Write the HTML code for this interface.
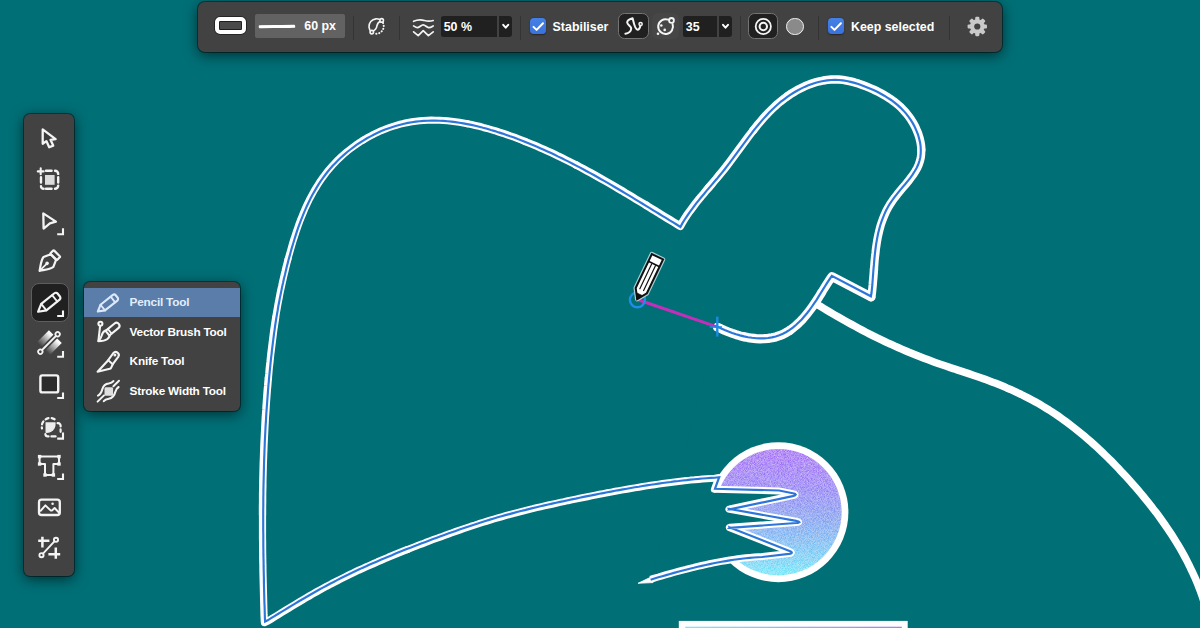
<!DOCTYPE html>
<html lang="en">
<head>
<meta charset="utf-8">
<title>Pencil Tool</title>
<style>
html,body{margin:0;padding:0;}
body{width:1200px;height:628px;overflow:hidden;background:#006f76;font-family:"Liberation Sans",sans-serif;}
#stage{position:relative;width:1200px;height:628px;overflow:hidden;background:#006f76;}
svg.art{position:absolute;left:0;top:0;}
.abs{position:absolute;}
#topbar{position:absolute;left:197.8px;top:1.7px;width:804.6px;height:50.3px;background:#424242;border-radius:7px;box-shadow:0 3px 14px rgba(0,0,0,.6),0 0 0 1px rgba(0,28,33,.6);}
#topbar .sep{position:absolute;top:14.5px;width:1px;height:24px;background:#343434;}
#topbar .txt{position:absolute;color:#fff;font-weight:bold;font-size:12.4px;line-height:16px;top:17px;white-space:nowrap;}
.field{position:absolute;top:14px;height:21.6px;background:#202020;border-radius:2.5px 0 0 2.5px;}
.cb{position:absolute;top:15.9px;width:16.4px;height:16.5px;border-radius:4px;background:linear-gradient(#4480e6,#3a72dc);box-shadow:0 0.5px 1.5px rgba(0,0,0,.45);}
.selbtn{position:absolute;top:11.3px;height:26.4px;background:#202020;border:1.2px solid #747474;border-radius:6.5px;box-sizing:border-box;}
#leftbar{position:absolute;left:24px;top:113.7px;width:50.3px;height:462.8px;background:#424242;border-radius:6px;box-shadow:0 3px 14px rgba(0,0,0,.6),0 0 0 1px rgba(0,28,33,.6);}
#menu{position:absolute;left:84px;top:282px;width:155.9px;height:129px;background:#424242;border-radius:6px;overflow:hidden;box-shadow:0 3px 14px rgba(0,0,0,.6),0 0 0 1px rgba(0,28,33,.6);}
#menu .row{position:absolute;left:0;width:100%;height:29.5px;}
#menu .row span{position:absolute;left:45.6px;top:6.8px;font-size:11.8px;line-height:16px;font-weight:bold;color:#fff;white-space:nowrap;letter-spacing:-0.22px;}
#menu .row.sel{background:#5a7da9;}
#menu .row.sel span{color:#e2eefc;}

</style>
</head>
<body>
<div id="stage">

<svg class="art" width="1200" height="628" viewBox="0 0 1200 628">
  <defs>
    <linearGradient id="cg" x1="0" y1="0" x2="0" y2="1">
      <stop offset="0" stop-color="#a462f6"/>
      <stop offset="0.28" stop-color="#9479f4"/>
      <stop offset="0.55" stop-color="#7b9cf0"/>
      <stop offset="0.8" stop-color="#6cc4f4"/>
      <stop offset="1" stop-color="#62e6f8"/>
    </linearGradient>
    <linearGradient id="rg" x1="0" y1="0" x2="1" y2="0">
      <stop offset="0" stop-color="#7fe6f4"/>
      <stop offset="1" stop-color="#b07cf0"/>
    </linearGradient>
    <filter id="noise" x="0" y="0" width="100%" height="100%">
      <feTurbulence type="fractalNoise" baseFrequency="1.3" numOctaves="1" seed="3" result="n"/>
      <feColorMatrix type="matrix" values="0 0 0 0 1  0 0 0 0 1  0 0 0 0 1  0.75 0 0 0 -0.2" result="a"/>
      <feComposite in="a" in2="SourceGraphic" operator="in" result="m"/>
      <feMerge><feMergeNode in="SourceGraphic"/><feMergeNode in="m"/></feMerge>
    </filter>
  </defs>
  <!-- ball -->
  <circle cx="778.4" cy="512.2" r="70" fill="#ffffff"/>
  <circle cx="778.4" cy="512.2" r="63.2" fill="url(#cg)" filter="url(#noise)"/>
  <!-- bottom card -->
  <rect x="678.8" y="620.9" width="228.9" height="12" fill="#ffffff"/>
  <rect x="685.2" y="626.7" width="216.6" height="6" fill="url(#rg)"/>
  <!-- arm (unselected) -->
  <path d="M816.8 304.4 L820.3 306.3 L823.7 308.4 L827.2 310.5 L830.6 312.5 L834.1 314.6 L837.5 316.6 L841.0 318.6 L844.5 320.5 L848.0 322.5 L851.5 324.4 L855.0 326.3 L858.5 328.2 L862.1 330.1 L865.6 332.0 L869.2 333.8 L872.7 335.6 L876.3 337.4 L879.9 339.1 L883.5 340.8 L887.1 342.6 L890.8 344.2 L894.4 345.9 L898.0 347.5 L901.7 349.1 L905.4 350.7 L909.0 352.3 L912.7 353.8 L916.4 355.3 L920.2 356.8 L923.9 358.2 L927.6 359.6 L931.4 361.0 L935.2 362.4 L938.9 363.7 L942.7 365.0 L946.5 366.3 L950.3 367.6 L954.1 368.8 L957.9 370.1 L961.8 371.4 L965.6 372.6 L969.4 373.9 L973.2 375.2 L977.0 376.5 L980.7 377.8 L984.5 379.1 L988.3 380.5 L992.0 381.9 L995.8 383.3 L999.5 384.8 L1003.2 386.3 L1006.8 387.9 L1010.5 389.4 L1014.1 391.1 L1017.7 392.8 L1021.3 394.5 L1024.9 396.3 L1028.4 398.1 L1031.9 400.0 L1035.4 401.9 L1038.9 403.8 L1042.3 405.9 L1045.7 407.9 L1049.1 410.0 L1052.4 412.2 L1055.8 414.4 L1059.1 416.7 L1062.3 419.0 L1065.6 421.3 L1068.8 423.7 L1071.9 426.1 L1075.1 428.6 L1078.2 431.1 L1081.3 433.6 L1084.4 436.2 L1087.5 438.8 L1090.5 441.4 L1093.5 444.1 L1096.5 446.8 L1099.4 449.5 L1102.3 452.3 L1105.2 455.1 L1108.1 457.9 L1111.0 460.7 L1113.8 463.6 L1116.6 466.5 L1119.4 469.4 L1122.1 472.4 L1124.9 475.3 L1127.6 478.3 L1130.3 481.3 L1132.9 484.3 L1135.6 487.3 L1138.2 490.3 L1140.8 493.4 L1143.4 496.5 L1145.9 499.6 L1148.4 502.7 L1150.9 505.8 L1153.3 509.0 L1155.8 512.1 L1158.2 515.3 L1160.5 518.5 L1162.8 521.7 L1165.1 525.0 L1167.4 528.3 L1169.6 531.6 L1171.8 534.9 L1173.9 538.2 L1176.0 541.6 L1178.1 545.0 L1180.1 548.4 L1182.1 551.9 L1184.0 555.4 L1185.9 558.9 L1187.7 562.4 L1189.5 566.0 L1191.2 569.6 L1192.9 573.2 L1194.6 576.8 L1196.2 580.5 L1197.7 584.2 L1199.2 588.0 L1200.6 591.8 L1202.0 595.6 L1203.3 599.5 L1204.5 603.3 L1206.0 607.0" fill="none" stroke="#ffffff" stroke-width="7.50" stroke-linejoin="round" stroke-linecap="butt" stroke-miterlimit="5"/>
  <!-- body fill -->
  <path d="M717.4 327.2 L721.0 328.7 L724.6 330.4 L728.3 331.9 L732.1 333.3 L735.9 334.6 L739.9 335.8 L743.9 336.8 L748.0 337.6 L752.0 338.2 L756.1 338.6 L760.1 338.8 L764.1 338.7 L768.1 338.4 L772.0 337.8 L775.8 336.9 L779.5 335.7 L783.1 334.2 L786.5 332.4 L789.8 330.3 L793.1 327.9 L796.1 325.4 L799.1 322.6 L802.0 319.7 L804.7 316.6 L807.4 313.4 L809.9 310.1 L812.3 306.8 L814.7 303.4 L816.9 300.0 L819.1 296.6 L821.2 293.2 L823.3 289.8 L825.4 286.4 L827.5 283.1 L829.6 279.8 L831.9 276.5 L871.2 297.0 L871.9 293.1 L872.3 289.1 L872.7 285.1 L873.0 281.1 L873.4 277.0 L873.7 273.0 L874.0 268.9 L874.3 264.9 L874.6 260.9 L875.0 256.9 L875.5 252.9 L875.9 248.9 L876.5 244.9 L877.1 241.0 L877.8 237.1 L878.7 233.2 L879.6 229.4 L880.6 225.6 L881.8 221.9 L883.2 218.2 L884.7 214.6 L886.3 211.0 L888.2 207.5 L890.2 204.1 L892.5 200.7 L894.9 197.4 L897.4 194.2 L900.1 190.9 L902.8 187.7 L905.5 184.6 L908.1 181.4 L910.6 178.1 L913.0 174.9 L915.2 171.6 L917.1 168.2 L918.7 164.7 L919.9 161.2 L920.8 157.5 L921.2 153.7 L921.3 149.9 L921.1 146.0 L920.5 142.1 L919.6 138.2 L918.4 134.4 L916.9 130.6 L915.2 126.8 L913.3 123.2 L911.1 119.7 L908.8 116.3 L906.2 113.1 L903.5 110.1 L900.7 107.2 L897.7 104.5 L894.6 102.0 L891.3 99.6 L888.0 97.4 L884.5 95.2 L881.0 93.3 L877.4 91.4 L873.7 89.6 L870.0 88.0 L866.2 86.4 L862.4 85.0 L858.5 83.6 L854.6 82.4 L850.7 81.4 L846.8 80.6 L842.9 79.9 L838.9 79.5 L835.0 79.4 L831.1 79.5 L827.2 79.9 L823.3 80.5 L819.4 81.3 L815.6 82.3 L811.8 83.5 L808.1 84.9 L804.4 86.4 L800.8 88.2 L797.2 90.0 L793.8 92.1 L790.3 94.2 L787.0 96.5 L783.8 98.9 L780.6 101.4 L777.6 103.9 L774.6 106.6 L771.7 109.4 L768.9 112.2 L766.1 115.1 L763.4 118.1 L760.8 121.1 L758.2 124.1 L755.7 127.3 L753.2 130.4 L750.7 133.6 L748.2 136.8 L745.8 140.1 L743.4 143.3 L741.0 146.6 L738.6 149.9 L736.2 153.1 L733.8 156.4 L731.4 159.6 L729.0 162.8 L726.6 166.0 L724.1 169.2 L721.6 172.3 L719.0 175.4 L716.5 178.5 L713.9 181.5 L711.3 184.6 L708.7 187.6 L706.1 190.6 L703.6 193.7 L701.0 196.7 L698.5 199.8 L696.0 202.9 L693.6 206.1 L691.2 209.3 L688.8 212.5 L686.5 215.8 L684.3 219.2 L682.2 222.7 L680.2 226.2 L676.9 224.1 L673.4 222.0 L670.0 219.9 L666.5 217.8 L663.1 215.7 L659.6 213.6 L656.2 211.4 L652.7 209.3 L649.3 207.2 L645.9 205.1 L642.4 203.0 L639.0 201.0 L635.5 198.9 L632.1 196.8 L628.7 194.7 L625.2 192.7 L621.8 190.6 L618.3 188.6 L614.8 186.5 L611.4 184.5 L607.9 182.5 L604.4 180.5 L601.0 178.6 L597.5 176.6 L594.0 174.6 L590.5 172.7 L587.0 170.8 L583.5 168.9 L579.9 167.0 L576.4 165.1 L572.8 163.3 L569.3 161.5 L565.7 159.7 L562.1 157.9 L558.5 156.2 L554.9 154.4 L551.3 152.7 L547.7 151.1 L544.0 149.4 L540.3 147.8 L536.7 146.2 L533.0 144.6 L529.2 143.1 L525.5 141.6 L521.8 140.1 L518.0 138.7 L514.2 137.2 L510.4 135.9 L506.6 134.5 L502.7 133.2 L498.8 132.0 L495.0 130.7 L491.1 129.6 L487.1 128.4 L483.2 127.4 L479.3 126.3 L475.3 125.4 L471.4 124.5 L467.4 123.7 L463.4 123.0 L459.4 122.3 L455.4 121.7 L451.5 121.2 L447.5 120.8 L443.5 120.5 L439.5 120.3 L435.5 120.2 L431.6 120.1 L427.6 120.2 L423.6 120.5 L419.7 120.8 L415.8 121.2 L411.8 121.8 L407.9 122.5 L404.0 123.3 L400.2 124.2 L396.3 125.3 L392.5 126.5 L388.7 127.8 L385.0 129.2 L381.2 130.7 L377.6 132.4 L373.9 134.1 L370.4 136.0 L366.8 137.9 L363.3 140.0 L359.9 142.1 L356.6 144.4 L353.3 146.7 L350.1 149.1 L346.9 151.6 L343.8 154.3 L340.9 156.9 L337.9 159.7 L335.1 162.6 L332.4 165.5 L329.8 168.5 L327.2 171.5 L324.8 174.7 L322.4 177.9 L320.1 181.2 L318.0 184.5 L315.9 187.9 L313.8 191.3 L311.9 194.8 L310.0 198.3 L308.2 201.9 L306.5 205.5 L304.8 209.2 L303.3 212.9 L301.7 216.7 L300.2 220.4 L298.8 224.2 L297.5 228.0 L296.1 231.9 L294.9 235.7 L293.6 239.6 L292.4 243.5 L291.3 247.4 L290.2 251.3 L289.1 255.2 L288.0 259.1 L287.0 263.0 L286.0 266.9 L285.1 270.8 L284.1 274.7 L283.2 278.7 L282.3 282.6 L281.5 286.5 L280.6 290.4 L279.8 294.3 L279.1 298.3 L278.3 302.2 L277.6 306.1 L276.9 310.1 L276.2 314.0 L275.6 318.0 L275.0 321.9 L274.4 325.9 L273.8 329.8 L273.3 333.8 L272.8 337.8 L272.3 341.8 L271.8 345.7 L271.3 349.7 L270.8 353.7 L270.4 357.7 L270.0 361.7 L269.5 365.7 L269.1 369.7 L268.8 373.6 L268.4 377.6 L268.0 381.6 L267.7 385.6 L267.3 389.6 L267.0 393.6 L266.7 397.6 L266.4 401.7 L266.1 405.7 L265.9 409.7 L265.6 413.7 L265.3 417.7 L265.1 421.7 L264.9 425.7 L264.7 429.7 L264.5 433.7 L264.3 437.8 L264.1 441.8 L263.9 445.8 L263.8 449.8 L263.6 453.8 L263.5 457.9 L263.3 461.9 L263.2 465.9 L263.1 469.9 L263.0 473.9 L262.9 478.0 L262.8 482.0 L262.8 486.0 L262.7 490.0 L262.6 494.1 L262.6 498.1 L262.6 502.1 L262.5 506.1 L262.5 510.2 L262.5 514.2 L262.5 518.2 L262.5 522.2 L262.5 526.3 L262.5 530.3 L262.5 534.3 L262.5 538.3 L262.6 542.3 L262.6 546.4 L262.6 550.4 L262.7 554.4 L262.7 558.4 L262.8 562.4 L262.9 566.4 L262.9 570.5 L263.0 574.5 L263.1 578.5 L263.2 582.5 L263.3 586.5 L263.4 590.5 L263.5 594.5 L263.6 598.5 L263.7 602.5 L263.8 606.5 L263.9 610.5 L264.0 614.5 L264.2 618.5 L264.4 622.6 L268.1 621.0 L271.5 618.9 L274.9 616.8 L278.3 614.7 L281.7 612.5 L285.2 610.4 L288.6 608.4 L292.0 606.3 L295.4 604.2 L298.9 602.1 L302.3 600.1 L305.8 598.0 L309.3 596.0 L312.7 594.0 L316.2 592.0 L319.7 590.1 L323.2 588.2 L326.8 586.2 L330.3 584.4 L333.8 582.5 L337.4 580.7 L341.0 578.9 L344.6 577.1 L348.2 575.3 L351.8 573.6 L355.4 571.8 L359.0 570.1 L362.7 568.5 L366.3 566.8 L370.0 565.2 L373.6 563.6 L377.3 561.9 L381.0 560.4 L384.7 558.8 L388.4 557.2 L392.1 555.7 L395.8 554.2 L399.5 552.7 L403.2 551.2 L407.0 549.7 L410.7 548.2 L414.5 546.8 L418.2 545.3 L422.0 543.9 L425.7 542.4 L429.5 541.0 L433.2 539.6 L437.0 538.2 L440.8 536.9 L444.5 535.5 L448.3 534.1 L452.1 532.8 L455.9 531.4 L459.7 530.1 L463.5 528.8 L467.3 527.5 L471.1 526.2 L474.9 525.0 L478.7 523.7 L482.5 522.5 L486.3 521.3 L490.2 520.1 L494.0 519.0 L497.8 517.9 L501.7 516.8 L505.5 515.7 L509.4 514.6 L513.3 513.6 L517.2 512.6 L521.0 511.6 L524.9 510.6 L528.8 509.6 L532.7 508.7 L536.6 507.7 L540.5 506.8 L544.4 505.9 L548.3 505.0 L552.2 504.2 L556.2 503.3 L560.1 502.4 L564.0 501.6 L567.9 500.7 L571.9 499.9 L575.8 499.1 L579.7 498.3 L583.6 497.5 L587.6 496.7 L591.5 495.9 L595.4 495.1 L599.4 494.3 L603.3 493.6 L607.3 492.8 L611.2 492.1 L615.2 491.3 L619.1 490.6 L623.1 489.9 L627.0 489.2 L631.0 488.5 L634.9 487.9 L638.9 487.2 L642.8 486.5 L646.8 485.9 L650.7 485.3 L654.7 484.7 L658.7 484.1 L662.6 483.5 L666.6 483.0 L670.6 482.5 L674.6 482.0 L678.5 481.5 L682.5 481.0 L686.5 480.6 L690.5 480.1 L694.5 479.8 L698.5 479.4 L702.5 479.0 L706.5 478.7 L710.5 478.4 L714.5 478.2 L718.5 477.8 L714.3 489.3 L779.0 491.0 L792.6 493.6 L794.0 494.0 L794.8 494.3 L795.1 494.6 L794.8 495.0 L794.0 495.3 L792.6 495.6 L729.6 509.0 L729.2 509.0 L729.1 509.1 L729.0 509.2 L729.1 509.3 L729.3 509.3 L729.6 509.4 L796.1 521.3 L797.4 521.6 L798.3 521.8 L798.5 522.1 L798.2 522.3 L797.4 522.4 L796.0 522.6 L729.8 527.3 L729.5 527.4 L729.3 527.4 L729.2 527.5 L729.2 527.6 L729.4 527.7 L729.7 527.8 L789.3 551.3 L790.5 551.9 L791.1 552.3 L791.3 552.7 L791.0 553.0 L790.3 553.3 L789.0 553.5 L762.0 556.6 L757.9 556.8 L753.9 557.1 L749.8 557.4 L745.7 557.8 L741.7 558.3 L737.7 558.8 L733.6 559.4 L729.6 560.0 L725.6 560.7 L721.6 561.4 L717.6 562.1 L713.6 562.9 L709.6 563.7 L705.6 564.6 L701.6 565.5 L697.6 566.4 L693.7 567.4 L689.7 568.3 L685.8 569.4 L681.8 570.4 L677.9 571.4 L673.9 572.5 L670.0 573.6 L666.1 574.7 L662.2 575.8 L658.3 577.0 L654.4 578.1 L650.5 579.4" fill="#006f76" stroke="none"/>
  <!-- tail tip -->
  <path d="M652 576.6 L638 583.3 L653 582.6 Z" fill="#ffffff" stroke="#ffffff" stroke-width="0.8" stroke-linejoin="round"/>
  <path d="M717.4 327.2 L721.0 328.7 L724.6 330.4 L728.3 331.9 L732.1 333.3 L735.9 334.6 L739.9 335.8 L743.9 336.8" fill="none" stroke="#ffffff" stroke-width="9.00" stroke-linejoin="round" stroke-linecap="round" stroke-miterlimit="5"/>
<path d="M743.9 336.8 L748.0 337.6 L752.0 338.2 L756.1 338.6 L760.1 338.8 L764.1 338.7 L768.1 338.4 L772.0 337.8 L775.8 336.9 L779.5 335.7 L783.1 334.2 L786.5 332.4 L789.8 330.3" fill="none" stroke="#ffffff" stroke-width="9.20" stroke-linejoin="round" stroke-linecap="round" stroke-miterlimit="5"/>
<path d="M789.8 330.3 L793.1 327.9 L796.1 325.4 L799.1 322.6 L802.0 319.7 L804.7 316.6 L807.4 313.4 L809.9 310.1 L812.3 306.8 L814.7 303.4 L816.9 300.0 L819.1 296.6 L821.2 293.2" fill="none" stroke="#ffffff" stroke-width="9.00" stroke-linejoin="round" stroke-linecap="round" stroke-miterlimit="5"/>
<path d="M821.2 293.2 L823.3 289.8 L825.4 286.4 L827.5 283.1 L829.6 279.8 L831.9 276.5 L871.2 297.0" fill="none" stroke="#ffffff" stroke-width="8.80" stroke-linejoin="round" stroke-linecap="round" stroke-miterlimit="5"/>
<path d="M871.2 297.0 L871.9 293.1 L872.3 289.1 L872.7 285.1 L873.0 281.1 L873.4 277.0 L873.7 273.0 L874.0 268.9" fill="none" stroke="#ffffff" stroke-width="8.40" stroke-linejoin="round" stroke-linecap="round" stroke-miterlimit="5"/>
<path d="M874.0 268.9 L874.3 264.9 L874.6 260.9 L875.0 256.9 L875.5 252.9 L875.9 248.9 L876.5 244.9 L877.1 241.0 L877.8 237.1 L878.7 233.2 L879.6 229.4 L880.6 225.6 L881.8 221.9 L883.2 218.2 L884.7 214.6 L886.3 211.0 L888.2 207.5 L890.2 204.1 L892.5 200.7 L894.9 197.4 L897.4 194.2 L900.1 190.9 L902.8 187.7 L905.5 184.6 L908.1 181.4 L910.6 178.1 L913.0 174.9 L915.2 171.6 L917.1 168.2 L918.7 164.7 L919.9 161.2 L920.8 157.5 L921.2 153.7 L921.3 149.9" fill="none" stroke="#ffffff" stroke-width="8.20" stroke-linejoin="round" stroke-linecap="round" stroke-miterlimit="5"/>
<path d="M921.3 149.9 L921.1 146.0 L920.5 142.1 L919.6 138.2 L918.4 134.4 L916.9 130.6 L915.2 126.8 L913.3 123.2 L911.1 119.7 L908.8 116.3 L906.2 113.1 L903.5 110.1 L900.7 107.2 L897.7 104.5 L894.6 102.0 L891.3 99.6 L888.0 97.4 L884.5 95.2 L881.0 93.3 L877.4 91.4 L873.7 89.6 L870.0 88.0 L866.2 86.4 L862.4 85.0 L858.5 83.6 L854.6 82.4 L850.7 81.4 L846.8 80.6 L842.9 79.9 L838.9 79.5 L835.0 79.4 L831.1 79.5 L827.2 79.9 L823.3 80.5 L819.4 81.3 L815.6 82.3 L811.8 83.5 L808.1 84.9 L804.4 86.4 L800.8 88.2 L797.2 90.0 L793.8 92.1 L790.3 94.2 L787.0 96.5" fill="none" stroke="#ffffff" stroke-width="8.40" stroke-linejoin="round" stroke-linecap="round" stroke-miterlimit="5"/>
<path d="M787.0 96.5 L783.8 98.9 L780.6 101.4 L777.6 103.9 L774.6 106.6 L771.7 109.4 L768.9 112.2 L766.1 115.1 L763.4 118.1 L760.8 121.1 L758.2 124.1 L755.7 127.3 L753.2 130.4" fill="none" stroke="#ffffff" stroke-width="8.20" stroke-linejoin="round" stroke-linecap="round" stroke-miterlimit="5"/>
<path d="M753.2 130.4 L750.7 133.6 L748.2 136.8 L745.8 140.1 L743.4 143.3 L741.0 146.6 L738.6 149.9 L736.2 153.1 L733.8 156.4 L731.4 159.6 L729.0 162.8 L726.6 166.0 L724.1 169.2 L721.6 172.3 L719.0 175.4 L716.5 178.5 L713.9 181.5 L711.3 184.6 L708.7 187.6" fill="none" stroke="#ffffff" stroke-width="8.00" stroke-linejoin="round" stroke-linecap="round" stroke-miterlimit="5"/>
<path d="M708.7 187.6 L706.1 190.6 L703.6 193.7 L701.0 196.7 L698.5 199.8 L696.0 202.9 L693.6 206.1 L691.2 209.3 L688.8 212.5 L686.5 215.8 L684.3 219.2 L682.2 222.7 L680.2 226.2 L676.9 224.1 L673.4 222.0 L670.0 219.9 L666.5 217.8 L663.1 215.7 L659.6 213.6 L656.2 211.4 L652.7 209.3 L649.3 207.2 L645.9 205.1" fill="none" stroke="#ffffff" stroke-width="7.80" stroke-linejoin="round" stroke-linecap="round" stroke-miterlimit="5"/>
<path d="M645.9 205.1 L642.4 203.0 L639.0 201.0 L635.5 198.9 L632.1 196.8 L628.7 194.7 L625.2 192.7 L621.8 190.6 L618.3 188.6 L614.8 186.5 L611.4 184.5 L607.9 182.5 L604.4 180.5 L601.0 178.6 L597.5 176.6 L594.0 174.6 L590.5 172.7 L587.0 170.8 L583.5 168.9 L579.9 167.0 L576.4 165.1" fill="none" stroke="#ffffff" stroke-width="7.60" stroke-linejoin="round" stroke-linecap="round" stroke-miterlimit="5"/>
<path d="M576.4 165.1 L572.8 163.3 L569.3 161.5 L565.7 159.7 L562.1 157.9 L558.5 156.2 L554.9 154.4 L551.3 152.7 L547.7 151.1 L544.0 149.4 L540.3 147.8 L536.7 146.2 L533.0 144.6 L529.2 143.1 L525.5 141.6" fill="none" stroke="#ffffff" stroke-width="7.40" stroke-linejoin="round" stroke-linecap="round" stroke-miterlimit="5"/>
<path d="M525.5 141.6 L521.8 140.1 L518.0 138.7 L514.2 137.2 L510.4 135.9 L506.6 134.5 L502.7 133.2 L498.8 132.0 L495.0 130.7 L491.1 129.6 L487.1 128.4 L483.2 127.4 L479.3 126.3 L475.3 125.4 L471.4 124.5 L467.4 123.7" fill="none" stroke="#ffffff" stroke-width="7.20" stroke-linejoin="round" stroke-linecap="round" stroke-miterlimit="5"/>
<path d="M467.4 123.7 L463.4 123.0 L459.4 122.3 L455.4 121.7 L451.5 121.2 L447.5 120.8 L443.5 120.5 L439.5 120.3 L435.5 120.2 L431.6 120.1 L427.6 120.2 L423.6 120.5 L419.7 120.8 L415.8 121.2 L411.8 121.8 L407.9 122.5 L404.0 123.3 L400.2 124.2 L396.3 125.3 L392.5 126.5 L388.7 127.8 L385.0 129.2 L381.2 130.7 L377.6 132.4 L373.9 134.1 L370.4 136.0 L366.8 137.9 L363.3 140.0" fill="none" stroke="#ffffff" stroke-width="7.00" stroke-linejoin="round" stroke-linecap="round" stroke-miterlimit="5"/>
<path d="M363.3 140.0 L359.9 142.1 L356.6 144.4 L353.3 146.7 L350.1 149.1 L346.9 151.6 L343.8 154.3 L340.9 156.9 L337.9 159.7 L335.1 162.6 L332.4 165.5 L329.8 168.5 L327.2 171.5 L324.8 174.7 L322.4 177.9 L320.1 181.2 L318.0 184.5 L315.9 187.9 L313.8 191.3 L311.9 194.8 L310.0 198.3 L308.2 201.9 L306.5 205.5 L304.8 209.2 L303.3 212.9 L301.7 216.7 L300.2 220.4 L298.8 224.2 L297.5 228.0 L296.1 231.9 L294.9 235.7 L293.6 239.6 L292.4 243.5 L291.3 247.4 L290.2 251.3 L289.1 255.2 L288.0 259.1" fill="none" stroke="#ffffff" stroke-width="6.80" stroke-linejoin="round" stroke-linecap="round" stroke-miterlimit="5"/>
<path d="M288.0 259.1 L287.0 263.0 L286.0 266.9 L285.1 270.8 L284.1 274.7 L283.2 278.7 L282.3 282.6 L281.5 286.5 L280.6 290.4 L279.8 294.3 L279.1 298.3 L278.3 302.2 L277.6 306.1 L276.9 310.1 L276.2 314.0 L275.6 318.0" fill="none" stroke="#ffffff" stroke-width="7.00" stroke-linejoin="round" stroke-linecap="round" stroke-miterlimit="5"/>
<path d="M275.6 318.0 L275.0 321.9 L274.4 325.9 L273.8 329.8 L273.3 333.8 L272.8 337.8 L272.3 341.8 L271.8 345.7 L271.3 349.7 L270.8 353.7 L270.4 357.7 L270.0 361.7 L269.5 365.7 L269.1 369.7 L268.8 373.6 L268.4 377.6" fill="none" stroke="#ffffff" stroke-width="7.20" stroke-linejoin="round" stroke-linecap="round" stroke-miterlimit="5"/>
<path d="M268.4 377.6 L268.0 381.6 L267.7 385.6 L267.3 389.6 L267.0 393.6 L266.7 397.6 L266.4 401.7 L266.1 405.7 L265.9 409.7 L265.6 413.7 L265.3 417.7 L265.1 421.7 L264.9 425.7 L264.7 429.7 L264.5 433.7 L264.3 437.8 L264.1 441.8 L263.9 445.8 L263.8 449.8 L263.6 453.8 L263.5 457.9 L263.3 461.9 L263.2 465.9 L263.1 469.9 L263.0 473.9 L262.9 478.0 L262.8 482.0 L262.8 486.0 L262.7 490.0 L262.6 494.1 L262.6 498.1 L262.6 502.1 L262.5 506.1 L262.5 510.2 L262.5 514.2" fill="none" stroke="#ffffff" stroke-width="7.40" stroke-linejoin="round" stroke-linecap="round" stroke-miterlimit="5"/>
<path d="M262.5 514.2 L262.5 518.2 L262.5 522.2 L262.5 526.3 L262.5 530.3 L262.5 534.3 L262.5 538.3 L262.6 542.3 L262.6 546.4 L262.6 550.4 L262.7 554.4 L262.7 558.4 L262.8 562.4 L262.9 566.4 L262.9 570.5 L263.0 574.5 L263.1 578.5 L263.2 582.5 L263.3 586.5 L263.4 590.5 L263.5 594.5 L263.6 598.5 L263.7 602.5 L263.8 606.5 L263.9 610.5 L264.0 614.5 L264.2 618.5 L264.4 622.6 L268.1 621.0 L271.5 618.9 L274.9 616.8 L278.3 614.7 L281.7 612.5 L285.2 610.4 L288.6 608.4 L292.0 606.3 L295.4 604.2 L298.9 602.1 L302.3 600.1 L305.8 598.0 L309.3 596.0 L312.7 594.0 L316.2 592.0 L319.7 590.1 L323.2 588.2 L326.8 586.2 L330.3 584.4 L333.8 582.5 L337.4 580.7 L341.0 578.9 L344.6 577.1 L348.2 575.3 L351.8 573.6 L355.4 571.8 L359.0 570.1 L362.7 568.5 L366.3 566.8 L370.0 565.2 L373.6 563.6 L377.3 561.9 L381.0 560.4 L384.7 558.8 L388.4 557.2 L392.1 555.7 L395.8 554.2 L399.5 552.7 L403.2 551.2 L407.0 549.7" fill="none" stroke="#ffffff" stroke-width="7.20" stroke-linejoin="round" stroke-linecap="round" stroke-miterlimit="5"/>
<path d="M407.0 549.7 L410.7 548.2 L414.5 546.8 L418.2 545.3 L422.0 543.9 L425.7 542.4 L429.5 541.0 L433.2 539.6 L437.0 538.2 L440.8 536.9 L444.5 535.5 L448.3 534.1 L452.1 532.8 L455.9 531.4 L459.7 530.1 L463.5 528.8 L467.3 527.5 L471.1 526.2 L474.9 525.0 L478.7 523.7 L482.5 522.5 L486.3 521.3 L490.2 520.1 L494.0 519.0 L497.8 517.9 L501.7 516.8 L505.5 515.7 L509.4 514.6 L513.3 513.6 L517.2 512.6 L521.0 511.6 L524.9 510.6 L528.8 509.6 L532.7 508.7 L536.6 507.7 L540.5 506.8 L544.4 505.9 L548.3 505.0 L552.2 504.2 L556.2 503.3 L560.1 502.4 L564.0 501.6 L567.9 500.7 L571.9 499.9 L575.8 499.1 L579.7 498.3 L583.6 497.5 L587.6 496.7 L591.5 495.9 L595.4 495.1 L599.4 494.3 L603.3 493.6 L607.3 492.8 L611.2 492.1 L615.2 491.3 L619.1 490.6 L623.1 489.9 L627.0 489.2 L631.0 488.5 L634.9 487.9 L638.9 487.2 L642.8 486.5 L646.8 485.9 L650.7 485.3 L654.7 484.7 L658.7 484.1 L662.6 483.5 L666.6 483.0 L670.6 482.5 L674.6 482.0 L678.5 481.5 L682.5 481.0 L686.5 480.6 L690.5 480.1 L694.5 479.8 L698.5 479.4 L702.5 479.0 L706.5 478.7 L710.5 478.4 L714.5 478.2 L718.5 477.8" fill="none" stroke="#ffffff" stroke-width="7.00" stroke-linejoin="round" stroke-linecap="round" stroke-miterlimit="5"/>
<path d="M718.5 477.8 L714.3 489.3" fill="none" stroke="#ffffff" stroke-width="6.80" stroke-linejoin="round" stroke-linecap="round" stroke-miterlimit="5"/><path d="M714.3 489.3 L779.0 491.0 L792.6 493.6 L794.0 494.0 L794.8 494.3 L795.1 494.6 L794.8 495.0 L794.0 495.3 L792.6 495.6 L729.6 509.0 L729.2 509.0 L729.1 509.1 L729.0 509.2 L729.1 509.3 L729.3 509.3 L729.6 509.4 L796.1 521.3 L797.4 521.6 L798.3 521.8 L798.5 522.1 L798.2 522.3 L797.4 522.4 L796.0 522.6 L729.8 527.3 L729.5 527.4 L729.3 527.4 L729.2 527.5 L729.2 527.6 L729.4 527.7 L729.7 527.8 L789.3 551.3 L790.5 551.9 L791.1 552.3 L791.3 552.7 L791.0 553.0 L790.3 553.3 L789.0 553.5 L762.0 556.6 L757.9 556.8 L753.9 557.1 L749.8 557.4 L745.7 557.8 L741.7 558.3 L737.7 558.8 L733.6 559.4 L729.6 560.0 L725.6 560.7 L721.6 561.4 L717.6 562.1 L713.6 562.9 L709.6 563.7 L705.6 564.6 L701.6 565.5 L697.6 566.4 L693.7 567.4 L689.7 568.3 L685.8 569.4 L681.8 570.4 L677.9 571.4 L673.9 572.5 L670.0 573.6 L666.1 574.7 L662.2 575.8 L658.3 577.0 L654.4 578.1 L650.5 579.4" fill="none" stroke="#ffffff" stroke-width="7.00" stroke-linejoin="round" stroke-linecap="butt" stroke-miterlimit="5"/>
  <path d="M717.6 326.8 L721.2 328.4 L724.7 330.0 L728.4 331.5 L732.2 333.0 L736.1 334.3 L740.0 335.4 L744.0 336.4 L748.0 337.2 L752.1 337.8 L756.1 338.2 L760.1 338.3 L764.1 338.3 L768.1 338.0 L771.9 337.4 L775.7 336.5 L779.3 335.3 L782.9 333.8 L786.3 332.0 L789.6 329.9 L792.8 327.6 L795.9 325.0 L798.8 322.3 L801.7 319.4 L804.4 316.3 L807.0 313.2 L809.6 309.9 L812.0 306.5 L814.3 303.2 L816.6 299.8 L818.7 296.4 L820.8 293.0 L822.9 289.6 L825.0 286.2 L827.1 282.9 L829.3 279.6 L831.8 275.9 L870.9 296.3 L871.5 293.0 L871.9 289.1 L872.3 285.1 L872.6 281.0 L872.9 277.0 L873.2 273.0 L873.5 268.9 L873.9 264.9 L874.2 260.8 L874.6 256.8 L875.0 252.8 L875.5 248.8 L876.0 244.9 L876.7 240.9 L877.4 237.0 L878.2 233.1 L879.2 229.3 L880.2 225.5 L881.4 221.8 L882.8 218.1 L884.3 214.4 L885.9 210.8 L887.8 207.3 L889.8 203.8 L892.1 200.5 L894.5 197.1 L897.1 193.9 L899.7 190.6 L902.4 187.4 L905.1 184.3 L907.7 181.1 L910.3 177.9 L912.6 174.6 L914.7 171.3 L916.6 168.0 L918.2 164.5 L919.4 161.0 L920.3 157.4 L920.7 153.7 L920.8 149.9 L920.6 146.1 L920.0 142.2 L919.1 138.4 L918.0 134.5 L916.5 130.8 L914.8 127.0 L912.9 123.4 L910.7 119.9 L908.4 116.6 L905.9 113.4 L903.2 110.4 L900.4 107.6 L897.4 104.9 L894.3 102.4 L891.1 100.0 L887.7 97.8 L884.3 95.7 L880.8 93.7 L877.2 91.8 L873.5 90.1 L869.8 88.5 L866.0 86.9 L862.2 85.4 L858.3 84.1 L854.5 82.9 L850.6 81.9 L846.7 81.0 L842.8 80.4 L838.9 80.0 L835.0 79.9 L831.1 80.0 L827.2 80.4 L823.4 81.0 L819.6 81.8 L815.8 82.8 L812.0 84.0 L808.3 85.3 L804.6 86.9 L801.0 88.6 L797.5 90.5 L794.0 92.5 L790.6 94.6 L787.3 96.9 L784.1 99.3 L780.9 101.7 L777.9 104.3 L774.9 107.0 L772.0 109.7 L769.2 112.5 L766.5 115.4 L763.8 118.4 L761.2 121.4 L758.6 124.5 L756.0 127.6 L753.5 130.7 L751.1 133.9 L748.6 137.1 L746.2 140.4 L743.8 143.6 L741.4 146.9 L739.0 150.2 L736.6 153.4 L734.2 156.7 L731.8 159.9 L729.4 163.2 L726.9 166.3 L724.5 169.5 L722.0 172.6 L719.4 175.7 L716.9 178.8 L714.3 181.8 L711.7 184.9 L709.1 187.9 L706.5 190.9 L704.0 194.0 L701.4 197.0 L698.9 200.1 L696.4 203.2 L694.0 206.4 L691.6 209.6 L689.2 212.8 L687.0 216.1 L684.7 219.5 L682.6 222.9 L680.4 226.9 L676.6 224.5 L673.2 222.4 L669.7 220.3 L666.3 218.2 L662.8 216.1 L659.4 214.0 L655.9 211.9 L652.5 209.8 L649.0 207.7 L645.6 205.6 L642.2 203.5 L638.7 201.4 L635.3 199.3 L631.8 197.2 L628.4 195.1 L625.0 193.1 L621.5 191.0 L618.1 189.0 L614.6 187.0 L611.1 184.9 L607.7 182.9 L604.2 180.9 L600.7 179.0 L597.3 177.0 L593.8 175.0 L590.3 173.1 L586.8 171.2 L583.2 169.3 L579.7 167.4 L576.2 165.6 L572.6 163.7 L569.1 161.9 L565.5 160.1 L561.9 158.3 L558.3 156.6 L554.7 154.8 L551.1 153.1 L547.5 151.5 L543.8 149.8 L540.2 148.2 L536.5 146.6 L532.8 145.0 L529.1 143.5 L525.4 142.0 L521.6 140.5 L517.8 139.1 L514.1 137.6 L510.2 136.3 L506.4 134.9 L502.6 133.6 L498.7 132.4 L494.8 131.1 L490.9 130.0 L487.0 128.8 L483.1 127.8 L479.2 126.7 L475.2 125.8 L471.3 124.9 L467.3 124.1 L463.3 123.4 L459.4 122.7 L455.4 122.1 L451.4 121.6 L447.4 121.2 L443.5 120.9 L439.5 120.7 L435.5 120.6 L431.6 120.6 L427.6 120.7 L423.7 120.9 L419.7 121.2 L415.8 121.6 L411.9 122.2 L408.0 122.9 L404.1 123.7 L400.3 124.7 L396.4 125.7 L392.6 126.9 L388.9 128.2 L385.1 129.6 L381.4 131.1 L377.7 132.8 L374.1 134.5 L370.6 136.4 L367.0 138.3 L363.6 140.4 L360.2 142.5 L356.8 144.7 L353.6 147.1 L350.4 149.5 L347.2 152.0 L344.2 154.6 L341.2 157.3 L338.3 160.0 L335.5 162.9 L332.7 165.8 L330.1 168.8 L327.6 171.8 L325.1 175.0 L322.8 178.2 L320.5 181.4 L318.4 184.7 L316.3 188.1 L314.3 191.6 L312.3 195.0 L310.5 198.6 L308.7 202.2 L307.0 205.8 L305.4 209.4 L303.8 213.1 L302.3 216.9 L300.8 220.6 L299.4 224.4 L298.0 228.2 L296.7 232.1 L295.5 235.9 L294.3 239.8 L293.1 243.7 L291.9 247.6 L290.8 251.5 L289.8 255.4 L288.7 259.3 L287.7 263.2 L286.7 267.1 L285.8 271.0 L284.9 274.9 L283.9 278.8 L283.1 282.7 L282.2 286.6 L281.4 290.6 L280.6 294.5 L279.8 298.4 L279.1 302.3 L278.3 306.3 L277.7 310.2 L277.0 314.1 L276.3 318.1 L275.7 322.0 L275.1 326.0 L274.6 329.9 L274.0 333.9 L273.5 337.9 L273.0 341.8 L272.5 345.8 L272.0 349.8 L271.6 353.8 L271.1 357.8 L270.7 361.7 L270.3 365.7 L269.9 369.7 L269.5 373.7 L269.1 377.7 L268.8 381.7 L268.4 385.7 L268.1 389.7 L267.8 393.7 L267.5 397.7 L267.2 401.7 L266.9 405.7 L266.6 409.7 L266.3 413.7 L266.1 417.7 L265.9 421.7 L265.6 425.8 L265.4 429.8 L265.2 433.8 L265.0 437.8 L264.8 441.8 L264.7 445.8 L264.5 449.8 L264.4 453.9 L264.2 457.9 L264.1 461.9 L264.0 465.9 L263.9 469.9 L263.8 474.0 L263.7 478.0 L263.6 482.0 L263.5 486.0 L263.4 490.1 L263.4 494.1 L263.3 498.1 L263.3 502.1 L263.3 506.1 L263.2 510.2 L263.2 514.2 L263.2 518.2 L263.2 522.2 L263.2 526.3 L263.2 530.3 L263.3 534.3 L263.3 538.3 L263.3 542.3 L263.3 546.4 L263.4 550.4 L263.4 554.4 L263.5 558.4 L263.6 562.4 L263.6 566.4 L263.7 570.4 L263.8 574.5 L263.9 578.5 L263.9 582.5 L264.0 586.5 L264.1 590.5 L264.2 594.5 L264.3 598.5 L264.4 602.5 L264.6 606.5 L264.7 610.5 L264.8 614.5 L264.9 618.5 L265.1 621.5 L267.7 620.3 L271.1 618.2 L274.5 616.1 L277.9 614.0 L281.4 611.9 L284.8 609.8 L288.2 607.8 L291.7 605.7 L295.1 603.6 L298.5 601.5 L302.0 599.5 L305.5 597.5 L308.9 595.5 L312.4 593.5 L315.9 591.5 L319.4 589.5 L322.9 587.6 L326.5 585.7 L330.0 583.8 L333.6 582.0 L337.1 580.1 L340.7 578.3 L344.3 576.5 L347.9 574.8 L351.5 573.0 L355.1 571.3 L358.8 569.6 L362.4 567.9 L366.1 566.3 L369.7 564.6 L373.4 563.0 L377.1 561.4 L380.8 559.8 L384.5 558.3 L388.2 556.7 L391.9 555.2 L395.6 553.6 L399.3 552.1 L403.0 550.6 L406.8 549.1 L410.5 547.7 L414.2 546.2 L418.0 544.8 L421.8 543.3 L425.5 541.9 L429.3 540.5 L433.0 539.1 L436.8 537.7 L440.6 536.3 L444.3 534.9 L448.1 533.6 L451.9 532.2 L455.7 530.9 L459.5 529.6 L463.3 528.3 L467.1 527.0 L470.9 525.7 L474.7 524.4 L478.5 523.2 L482.3 522.0 L486.2 520.8 L490.0 519.6 L493.8 518.5 L497.7 517.3 L501.5 516.2 L505.4 515.1 L509.3 514.1 L513.1 513.1 L517.0 512.0 L520.9 511.0 L524.8 510.1 L528.7 509.1 L532.6 508.1 L536.5 507.2 L540.4 506.3 L544.3 505.4 L548.2 504.5 L552.1 503.6 L556.0 502.8 L560.0 501.9 L563.9 501.1 L567.8 500.2 L571.7 499.4 L575.7 498.6 L579.6 497.7 L583.5 496.9 L587.5 496.1 L591.4 495.4 L595.3 494.6 L599.3 493.8 L603.2 493.1 L607.2 492.3 L611.1 491.6 L615.1 490.8 L619.0 490.1 L623.0 489.4 L626.9 488.7 L630.9 488.0 L634.8 487.3 L638.8 486.7 L642.7 486.0 L646.7 485.4 L650.7 484.8 L654.6 484.2 L658.6 483.6 L662.6 483.0 L666.5 482.5 L670.5 482.0 L674.5 481.4 L678.5 481.0 L682.5 480.5 L686.5 480.1 L690.4 479.6 L694.4 479.2 L698.4 478.9 L702.4 478.5 L706.5 478.2 L710.5 477.9 L714.5 477.7 L719.2 477.2 L715.0 488.8 L779.1 490.5 L792.7 493.2 L794.1 493.5 L795.1 493.9 L795.7 494.6 L795.1 495.4 L794.1 495.7 L792.7 496.1 L729.7 509.4 L729.4 509.5 L729.3 509.5 L729.6 509.2 L729.3 508.9 L729.4 508.9 L729.7 509.0 L796.2 520.9 L797.6 521.2 L798.5 521.4 L799.3 522.1 L798.4 522.7 L797.5 522.9 L796.1 523.0 L729.8 527.8 L729.5 527.8 L729.5 527.8 L729.7 527.6 L729.6 527.3 L729.6 527.3 L729.9 527.4 L789.5 551.0 L790.7 551.5 L791.5 552.0 L791.8 552.8 L791.3 553.4 L790.4 553.7 L789.1 553.9 L762.0 557.0 L757.9 557.2 L753.9 557.5 L749.8 557.9 L745.8 558.3 L741.7 558.7 L737.7 559.2 L733.7 559.8 L729.7 560.4 L725.6 561.1 L721.6 561.8 L717.6 562.5 L713.6 563.3 L709.7 564.1 L705.7 565.0 L701.7 565.9 L697.7 566.8 L693.8 567.8 L689.8 568.7 L685.9 569.7 L681.9 570.8 L678.0 571.8 L674.0 572.9 L670.1 574.0 L666.2 575.1 L662.3 576.2 L658.4 577.3 L654.5 578.5 L650.6 579.8" fill="none" stroke="#2c76da" stroke-width="2.15" stroke-linejoin="miter" stroke-linecap="butt" stroke-miterlimit="5"/>
  <!-- live pencil stroke -->
  <line x1="637.3" y1="299.5" x2="717" y2="326.9" stroke="#c42fba" stroke-width="3.1"/>
  <circle cx="637.4" cy="299.8" r="7.5" fill="none" stroke="#1f8de6" stroke-width="2.4"/>
  <path d="M717.3 316.6 V336.6" stroke="#1c8be2" stroke-width="2.4" fill="none"/><path d="M709.6 327 H722" stroke="#1c8be2" stroke-width="1.8" fill="none" opacity="0.85"/>
  <!-- pencil cursor -->
  <g transform="translate(637.2 299.2) rotate(25.5)">
    <path d="M0 0 L-6.2 -9.5 L-6.2 -47 L6.2 -47 L6.2 -9.5 Z" fill="#ffffff" stroke="#a9cfd3" stroke-width="4.4" stroke-linejoin="round"/>
    <path d="M0 0 L-6.2 -9.5 L-6.2 -47 L6.2 -47 L6.2 -9.5 Z" fill="#ffffff" stroke="#111111" stroke-width="2" stroke-linejoin="miter"/>
    <path d="M-6.2 -39 H6.2" stroke="#111" stroke-width="1.7"/>
    <path d="M-2.1 -38.5 V-10 M2.1 -38.5 V-10" stroke="#111" stroke-width="1.2"/>
    <path d="M0 0.5 L-3.6 -5.4 H3.6 Z" fill="#111" stroke="#111" stroke-width="0.8"/>
  </g>
</svg>

<div id="topbar">
  <!-- stroke style swatch -->
  <div class="abs" style="left:16.9px;top:15.1px;width:31.4px;height:17.5px;box-sizing:border-box;border:4.4px solid #fff;border-top-width:4.9px;border-bottom-width:4.9px;border-radius:5px;background:#4a4a4a;box-shadow:0 0 0 .8px #1e1e1e, inset 0 0 0 .9px #1e1e1e;"></div>
  <!-- stroke width field -->
  <div class="abs" style="left:57.5px;top:12.4px;width:89.5px;height:23.7px;background:#626262;border-radius:2px;">
    <span class="txt" style="left:49px;top:3.9px;">60 px</span>
  </div>
  <div class="sep" style="left:155px"></div>
  <div class="sep" style="left:201.5px"></div>
  <div class="field" style="left:243.3px;width:55.7px;"><span class="txt" style="left:2.6px;top:3.5px">50 %</span></div>
  <div class="field" style="left:301.3px;width:12.7px;border-radius:0 3px 3px 0;"></div>
  <div class="sep" style="left:322px"></div>
  <div class="cb" style="left:332px"></div>
  <span class="txt" style="left:354.8px">Stabiliser</span>
  <div class="selbtn" style="left:420.3px;width:31.4px"></div>
  <div class="abs" style="left:454px;top:11.5px;width:27.5px;height:25.7px;background:#464646;border-radius:6px;"></div>
  <div class="field" style="left:485.6px;width:33.3px;"><span class="txt" style="left:2.4px;top:3.5px">35</span></div>
  <div class="field" style="left:521px;width:12.8px;border-radius:0 3px 3px 0;"></div>
  <div class="sep" style="left:542px"></div>
  <div class="selbtn" style="left:550.5px;width:29.5px"></div>
  <div class="abs" style="left:588.6px;top:15.9px;width:17.4px;height:17.4px;box-sizing:border-box;border-radius:50%;background:#8a8a8a;border:1.9px solid #f4f4f4;"></div>
  <div class="sep" style="left:620px"></div>
  <div class="cb" style="left:630px"></div>
  <span class="txt" style="left:653.2px">Keep selected</span>
  <div class="sep" style="left:751px"></div>
  <!-- icon overlay in page coordinates -->
  <svg class="abs" style="left:0;top:0" width="804.5" height="51" viewBox="198 1.5 804.5 51" fill="none" stroke="#f4f4f4" stroke-linecap="round" stroke-linejoin="round">
    <!-- stroke preview line -->
    <path d="M259.6 25.5 C268 25.1 286 25.5 294.2 25.2 L294.4 26.3 C286 26.9 268 26.2 259.6 26.8 Z" fill="#fff" stroke="#fff" stroke-width="1.7"/>
    <!-- curve icon -->
    <g stroke-width="1.6">
      <path d="M381.5 20.1 A7.6 7.6 0 0 0 371.7 31.8"/>
      <path d="M383 22.4 A7.6 7.6 0 0 1 374.2 33" stroke-dasharray="0.2 2.75" stroke-width="2"/>
      <path d="M372.6 30.6 C376.4 29.6 376.6 27.2 377 25 C377.5 22.6 378.8 21.4 380.6 20.7"/>
      <circle cx="381.7" cy="19.9" r="1.75" fill="#424242"/>
      <circle cx="371.8" cy="31.6" r="1.75" fill="#424242"/>
    </g>
    <!-- smoothing icon -->
    <g stroke-width="1.7">
      <path d="M413.6 20.8 C416.6 19.4 419.6 19 422.6 19.6 C425.6 20.2 428 21.6 433.2 20"/>
      <path d="M413.6 25.4 C415 26.4 416.4 27.4 417.8 27.2 C419.8 26.8 421.2 24.4 423.2 24.4 C425.2 24.4 426.6 26.9 428.6 27.2 C430.2 27.4 431.6 26.4 433.2 25.4"/>
      <path d="M413.6 31.3 L418.2 35.2 L423.2 30.2 L428.4 35.2 L433.2 31.3"/>
    </g>
    <!-- dropdown chevrons -->
    <path d="M503.2 24.3 L505.7 27.2 L508.2 24.3" stroke="#fff" stroke-width="2"/>
    <path d="M723 24.3 L725.5 27.2 L728 24.3" stroke="#fff" stroke-width="2"/>
    <!-- checkmarks -->
    <path d="M533.5 26.4 L536.6 29.4 L543 22.7" stroke="#fff" stroke-width="2"/>
    <path d="M831.4 26.4 L834.5 29.4 L840.9 22.7" stroke="#fff" stroke-width="2"/>
    <!-- rope mode -->
    <g stroke-width="2">
      <path d="M625.4 33.2 C628.6 32.8 631.2 30.6 631.2 28 C631.2 25.6 627.4 24.4 627.2 22 C627 19.8 630 18.6 632.6 17.8 C633.6 21 634.6 29 637.6 29.2 C639.4 29.2 640 27 640.4 25.2"/>
      <circle cx="640.6" cy="23.5" r="1.6" stroke-width="1.5"/>
    </g>
    <!-- window mode -->
    <g stroke-width="2">
      <path d="M668.1 19.1 A7.4 7.4 0 1 0 672.6 23.6"/>
      <circle cx="671.5" cy="19.9" r="2.4" stroke-width="1.8"/>
      <circle cx="661.3" cy="25" r="1.3" fill="#f4f4f4" stroke="none"/>
      <circle cx="664.7" cy="29.4" r="1.3" fill="#f4f4f4" stroke="none"/>
      <circle cx="658" cy="33.3" r="1.3" fill="#f4f4f4" stroke="none"/>
    </g>
    <!-- concentric -->
    <circle cx="763.3" cy="26" r="7.6" stroke-width="1.8"/>
    <circle cx="763.3" cy="26" r="3.7" stroke-width="2.1"/>
    <!-- gear -->
    <g transform="translate(977.3 26)" stroke="none" fill="#c9c9c9">
      <circle r="7.3"/>
      <rect x="-2.1" y="-9.7" width="4.2" height="19.4" rx="1.1"/>
      <rect x="-2.1" y="-9.7" width="4.2" height="19.4" rx="1.1" transform="rotate(45)"/>
      <rect x="-2.1" y="-9.7" width="4.2" height="19.4" rx="1.1" transform="rotate(90)"/>
      <rect x="-2.1" y="-9.7" width="4.2" height="19.4" rx="1.1" transform="rotate(135)"/>
      <circle r="3.1" fill="#424242"/>
    </g>
  </svg>
</div>

<div id="leftbar"></div>
<div class="abs" style="left:31px;top:283px;width:38px;height:39px;box-sizing:border-box;background:#202020;border:1px solid #5e5e5e;border-radius:8px;"></div>
<svg class="abs" style="left:24px;top:114px" width="51" height="463" viewBox="24 114 51 463" fill="none" stroke="#f4f4f4" stroke-linecap="round" stroke-linejoin="round">
  <defs>
    <linearGradient id="gt" x1="0" y1="0" x2="1" y2="0">
      <stop offset="0" stop-color="#fff" stop-opacity="0"/>
      <stop offset="0.85" stop-color="#fff" stop-opacity="0.95"/>
      <stop offset="1" stop-color="#fff" stop-opacity="1"/>
    </linearGradient>
  </defs>
  <!-- move tool -->
  <path d="M42.7 129.4 L42.7 143.8 L46.4 141.1 L49.2 147.2 L53.2 145.6 L50.5 139.8 L55.6 139.2 Z" stroke-width="2.30" fill="#3c3c3c"/>
  <!-- artboard tool -->
  <g stroke-width="2.40">
    <rect x="45" y="175" width="9.6" height="9.8" fill="#dcdcdc" stroke="none"/>
    <path d="M46 170.7 H51.6 M55 170.7 A3.2 3.2 0 0 1 58.2 173.9 M58.2 177.3 V182.6 M58.2 185.6 A3.2 3.2 0 0 1 55 188.8 M51.6 188.8 H46 M43.6 188.8 A2.6 2.6 0 0 1 41 186.2 M41 182.6 V177.3"/>
    <path d="M37.8 171.4 H43.6 M40.7 168.4 V174.2" stroke-width="2.10"/>
  </g>
  <!-- node tool -->
  <path d="M43.3 213.4 L43.6 228.6 L49.9 223.4 L55.9 221.6 Z" stroke-width="2.30"/>
  <path d="M63 228.2 V234.3 H57.2" stroke-width="2.10" stroke-linecap="butt" stroke-linejoin="miter"/>
  <!-- pen tool -->
  <g transform="translate(39.6 270.8) rotate(45)" stroke-width="2.20">
    <path d="M0 0 C-2.6 -4 -6.4 -8 -7 -12.5 L-3.8 -19.6 H3.8 L7 -12.5 C6.4 -8 2.6 -4 0 0 Z"/>
    <rect x="-4.7" y="-24.6" width="9.4" height="5" rx="0.8"/>
    <path d="M0 -1 V-9.2" stroke-width="1.70"/>
    <circle cx="0" cy="-10.6" r="1.2" fill="#f4f4f4" stroke-width="1.20"/>
  </g>
  <!-- pencil tool (selected) -->
  <g transform="translate(37.9 311.9) rotate(51)" stroke-width="2.20">
    <path d="M0 -0.3 L-4.1 -7.6 V-24.6 A2.2 2.2 0 0 1 -1.9 -26.8 H1.9 A2.2 2.2 0 0 1 4.1 -24.6 V-7.6 Z"/>
    <path d="M-4.1 -7.6 H4.1 M-4.1 -21.6 H4.1" stroke-width="1.90"/>
  </g>
  <path d="M63 310.4 V316 H57.2" stroke-width="2.10" stroke-linecap="butt" stroke-linejoin="miter"/>
  <!-- gradient tool -->
  <g transform="translate(49 343) rotate(-45.3)">
    <rect x="-8" y="-9" width="17" height="18" fill="url(#gt)" stroke="none"/>
    <path d="M-12.4 0 H12.4" stroke="#424242" stroke-width="5.40" stroke-linecap="butt"/>
    <path d="M-10.2 0 H10.2" stroke-width="1.80"/>
    <circle cx="-12.3" cy="0" r="2.2" stroke-width="1.70" fill="#424242"/>
    <circle cx="12.3" cy="0" r="2.2" stroke-width="1.70" fill="#424242"/>
  </g>
  <path d="M63 351 V356.8 H57.2" stroke-width="2.10" stroke-linecap="butt" stroke-linejoin="miter"/>
  <!-- rectangle tool -->
  <rect x="40.4" y="375.4" width="17.8" height="17" rx="2" stroke-width="2.40" fill="#2c2c2c"/>
  <path d="M63 392.4 V398 H57.2" stroke-width="2.10" stroke-linecap="butt" stroke-linejoin="miter"/>
  <!-- shape builder -->
  <g stroke-width="2.20">
    <path d="M45.5 422.3 H55.5 A8.9 8.9 0 0 1 45.5 432.8 Z" fill="#ececec" stroke="none"/>
    <path d="M55.1 419.6 A8.4 8.4 0 0 0 42 428.4" stroke-dasharray="3.1 3.1" stroke-dashoffset="-0.6" />
    <path d="M57.6 423.2 H58.2 A2.4 2.4 0 0 1 60.6 425.6 V426.4 M60.6 429.4 V431.8 M55.6 436.4 H51.4 M48.6 436.4 H47.8 A2.4 2.4 0 0 1 45.4 434.2"/>
  </g>
  <path d="M63 432.6 V438.6 H57.2" stroke-width="2.10" stroke-linecap="butt" stroke-linejoin="miter"/>
  <!-- artistic text tool -->
  <g stroke-width="2.00">
    <path d="M39.6 456.6 H59 V464 H53.4 V475 H45 V464 H39.6 Z"/>
    <g fill="#f4f4f4" stroke="none">
      <rect x="37.9" y="454.9" width="3.4" height="3.4"/><rect x="57.3" y="454.9" width="3.4" height="3.4"/>
      <rect x="37.9" y="462.3" width="3.4" height="3.4"/><rect x="57.3" y="462.3" width="3.4" height="3.4"/>
      <rect x="43.3" y="473.3" width="3.4" height="3.4"/><rect x="51.7" y="473.3" width="3.4" height="3.4"/>
    </g>
  </g>
  <path d="M63 473.4 V479 H57.2" stroke-width="2.10" stroke-linecap="butt" stroke-linejoin="miter"/>
  <!-- place image -->
  <rect x="39" y="499.6" width="20.8" height="15.4" rx="2.6" stroke-width="2.30"/>
  <path d="M40.6 510.8 L45.4 505.4 L50.6 510.4 L52.2 510.4 L54.6 508 L59.2 512.8" stroke-width="2.00"/>
  <circle cx="52.6" cy="503.8" r="1.3" fill="#f4f4f4" stroke="none"/>
  <!-- vector crop -->
  <g stroke-width="2.50" stroke-linecap="butt">
    <path d="M38.2 540.8 H49.4 M42.4 536.8 V547.6"/>
    <path d="M48.4 554.2 H60.2 M55.8 547.6 V558.8"/>
  </g>
  <path d="M43 553.6 L54.4 541.4" stroke-width="1.90"/>
  <circle cx="41.5" cy="555.2" r="2.1" stroke-width="1.90"/>
  <circle cx="56" cy="539.8" r="2.1" stroke-width="1.90"/>
</svg>
<div id="menu"><div class="row sel" style="top:5.5px"><span>Pencil Tool</span></div>
  <div class="row" style="top:35px"><span>Vector Brush Tool</span></div>
  <div class="row" style="top:64.5px"><span>Knife Tool</span></div>
  <div class="row" style="top:94px"><span>Stroke Width Tool</span></div>

  <svg class="abs" style="left:0;top:0" width="156.5" height="129" viewBox="84 282 156.5 129" fill="none" stroke="#f4f4f4" stroke-width="2.10" stroke-linecap="round" stroke-linejoin="round">
    <!-- pencil -->
    <g transform="translate(97.6 311.7) rotate(51.5)" stroke="#dce9fc">
      <path d="M0 -0.3 L-3.6 -6.6 V-22.4 A2 2 0 0 1 -1.6 -24.4 H1.6 A2 2 0 0 1 3.6 -22.4 V-6.6 Z"/>
      <path d="M-3.6 -6.6 H3.6 M-3.6 -19.6 H3.6" stroke-width="1.90"/>
    </g>
    <!-- vector brush -->
    <circle cx="100.4" cy="323.7" r="2"/>
    <path d="M100.1 326 L98.4 340.8"/>
    <path d="M105.6 330.6 C102.8 331.6 102.2 333.6 101.6 335.8 C101 338 100 339.8 98.3 341.2 C102 341.2 105.4 340.6 107.4 339 C108.8 337.8 109.4 336.8 109.8 335.6"/>
    <g transform="translate(107.5 333.2) rotate(-39.5)">
      <path d="M0 -3 H11.6 A3 3 0 0 1 11.6 3 H0 Z"/>
      <path d="M2.9 -3 V3" stroke-width="1.80"/>
    </g>
    <!-- knife -->
    <path d="M97.6 371.8 L108.2 360.2 L113.4 353 A3.1 3.1 0 0 1 118.4 356.6 L112.8 364.2 L110.8 368.4 Z"/>
    <path d="M108.2 360.2 L112.8 364.2" stroke-width="1.90"/>
    <circle cx="114.9" cy="354.9" r="0.9" fill="#f4f4f4" stroke-width="1.20"/>
    <!-- stroke width -->
    <path d="M97.6 401.6 L104 395.4 M113.4 386.2 L119 380.8" stroke-width="2.00"/>
    <rect x="104.5" y="387.2" width="8.6" height="8.6" rx="1.4" fill="#e0e0e0" stroke="none"/>
    <path d="M98 395.6 C100.6 394.4 101.6 392 102.4 389 C103.4 385.4 105.8 383.8 108.8 383.5 C110.8 383.3 112.4 382.5 113.4 381.2"/>
    <path d="M103.8 401.2 C105 399.7 106.8 399.1 108.8 398.7 C112.4 398 114.4 395.6 115.2 392.2 C115.8 389.6 117 388 118.6 387"/>
  </svg>

  </div>

</div>
</body>
</html>
